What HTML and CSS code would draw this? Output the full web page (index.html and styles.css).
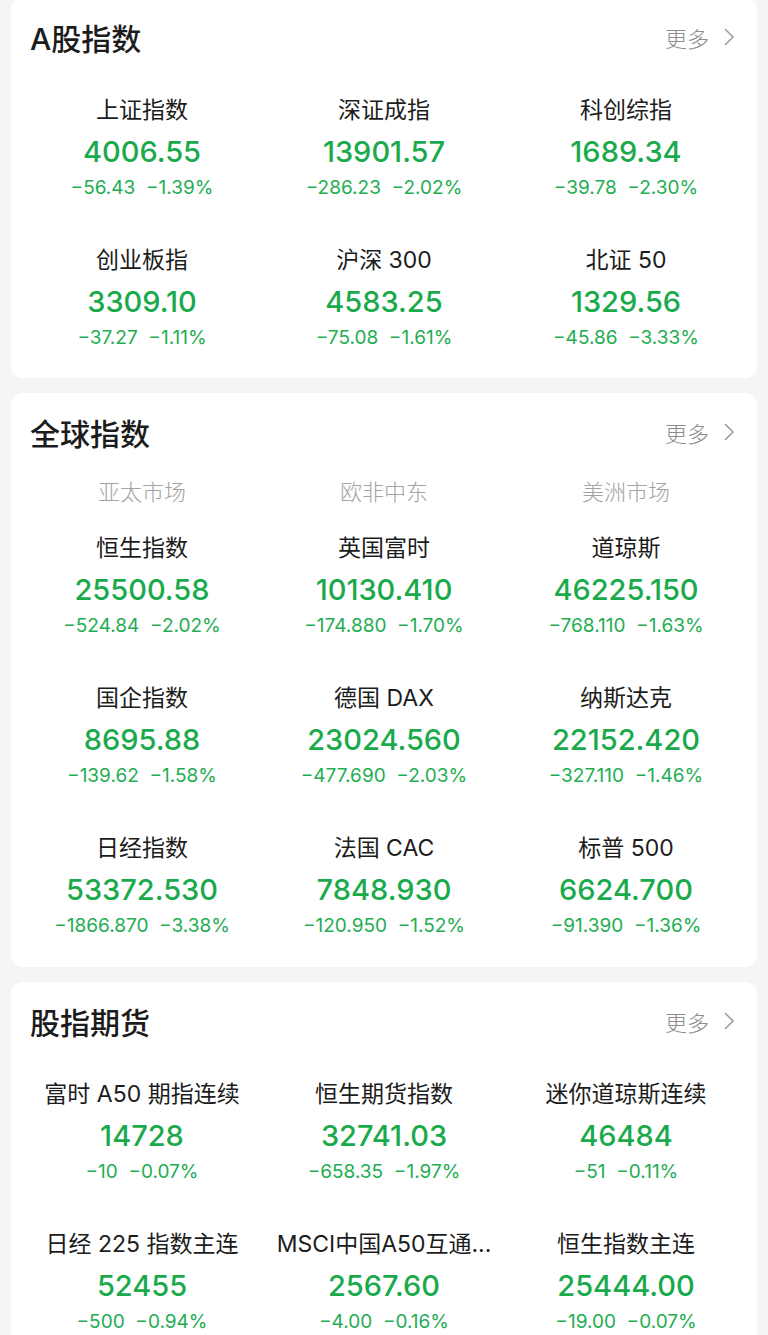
FILE: index.html
```html
<!DOCTYPE html>
<html lang="zh-CN">
<head>
  <meta charset="UTF-8">
  <meta name="viewport" content="width=device-width, initial-scale=1.0">
  <title>指数</title>
  <link rel="stylesheet" href="styles.css">
</head>
<body>

  <section class="card first">
    <div class="card-head">
      <h2>A股指数</h2>
      <a class="more" href="#">更多
        <svg width="12" height="20" viewBox="0 0 12 20"><polyline points="2,2 10,10 2,18" /></svg>
      </a>
    </div>
    <div class="grid">
      <div class="item"><div class="name">上证指数</div><div class="value">4006.55</div><div class="change">−56.43&nbsp;&nbsp;−1.39%</div></div>
      <div class="item"><div class="name">深证成指</div><div class="value">13901.57</div><div class="change">−286.23&nbsp;&nbsp;−2.02%</div></div>
      <div class="item"><div class="name">科创综指</div><div class="value">1689.34</div><div class="change">−39.78&nbsp;&nbsp;−2.30%</div></div>
      <div class="item"><div class="name">创业板指</div><div class="value">3309.10</div><div class="change">−37.27&nbsp;&nbsp;−1.11%</div></div>
      <div class="item"><div class="name">沪深 300</div><div class="value">4583.25</div><div class="change">−75.08&nbsp;&nbsp;−1.61%</div></div>
      <div class="item"><div class="name">北证 50</div><div class="value">1329.56</div><div class="change">−45.86&nbsp;&nbsp;−3.33%</div></div>
    </div>
  </section>

  <section class="card">
    <div class="card-head">
      <h2>全球指数</h2>
      <a class="more" href="#">更多
        <svg width="12" height="20" viewBox="0 0 12 20"><polyline points="2,2 10,10 2,18" /></svg>
      </a>
    </div>
    <div class="regions">
      <span>亚太市场</span>
      <span>欧非中东</span>
      <span>美洲市场</span>
    </div>
    <div class="grid after-regions">
      <div class="item"><div class="name">恒生指数</div><div class="value">25500.58</div><div class="change">−524.84&nbsp;&nbsp;−2.02%</div></div>
      <div class="item"><div class="name">英国富时</div><div class="value">10130.410</div><div class="change">−174.880&nbsp;&nbsp;−1.70%</div></div>
      <div class="item"><div class="name">道琼斯</div><div class="value">46225.150</div><div class="change">−768.110&nbsp;&nbsp;−1.63%</div></div>
      <div class="item"><div class="name">国企指数</div><div class="value">8695.88</div><div class="change">−139.62&nbsp;&nbsp;−1.58%</div></div>
      <div class="item"><div class="name">德国 DAX</div><div class="value">23024.560</div><div class="change">−477.690&nbsp;&nbsp;−2.03%</div></div>
      <div class="item"><div class="name">纳斯达克</div><div class="value">22152.420</div><div class="change">−327.110&nbsp;&nbsp;−1.46%</div></div>
      <div class="item"><div class="name">日经指数</div><div class="value">53372.530</div><div class="change">−1866.870&nbsp;&nbsp;−3.38%</div></div>
      <div class="item"><div class="name">法国 CAC</div><div class="value">7848.930</div><div class="change">−120.950&nbsp;&nbsp;−1.52%</div></div>
      <div class="item"><div class="name">标普 500</div><div class="value">6624.700</div><div class="change">−91.390&nbsp;&nbsp;−1.36%</div></div>
    </div>
  </section>

  <section class="card">
    <div class="card-head">
      <h2>股指期货</h2>
      <a class="more" href="#">更多
        <svg width="12" height="20" viewBox="0 0 12 20"><polyline points="2,2 10,10 2,18" /></svg>
      </a>
    </div>
    <div class="grid">
      <div class="item"><div class="name">富时 A50 期指连续</div><div class="value">14728</div><div class="change">−10&nbsp;&nbsp;−0.07%</div></div>
      <div class="item"><div class="name">恒生期货指数</div><div class="value">32741.03</div><div class="change">−658.35&nbsp;&nbsp;−1.97%</div></div>
      <div class="item"><div class="name">迷你道琼斯连续</div><div class="value">46484</div><div class="change">−51&nbsp;&nbsp;−0.11%</div></div>
      <div class="item"><div class="name">日经 225 指数主连</div><div class="value">52455</div><div class="change">−500&nbsp;&nbsp;−0.94%</div></div>
      <div class="item"><div class="name">MSCI中国A50互通...</div><div class="value">2567.60</div><div class="change">−4.00&nbsp;&nbsp;−0.16%</div></div>
      <div class="item"><div class="name">恒生指数主连</div><div class="value">25444.00</div><div class="change">−19.00&nbsp;&nbsp;−0.07%</div></div>
    </div>
  </section>

</body>
</html>
```

FILE: styles.css
```css
body { margin: 0; background: #f5f5f5; font-family: "Inter", "Noto Sans CJK SC", sans-serif; color: #1c1c1c; }
.card { background: #fff; margin: 0 11px 15px; border-radius: 12px; }
.card.first { margin-top: -2px; }
.card-head { height: 77px; padding: 0 22px 3px 19px; display: flex; align-items: center; justify-content: space-between; }
.card-head h2 { margin: 0; font-size: 30px; font-weight: 500; color: #1c1c1c; }
.more { display: flex; align-items: center; gap: 14px; font-size: 22px; font-weight: 300; color: #8c8c8c; text-decoration: none; }
.more svg { fill: none; stroke: #999; stroke-width: 1.5; }
.regions { display: grid; grid-template-columns: repeat(3, 1fr); padding: 0 10px; height: 34px; align-items: center; }
.regions span { text-align: center; font-size: 22px; font-weight: 300; color: #a3a3a3; }
.grid { display: grid; grid-template-columns: repeat(3, 1fr); row-gap: 43px; padding: 17px 10px 26px; }
.grid.after-regions { padding-top: 26px; padding-bottom: 27px; }
.item { display: flex; flex-direction: column; align-items: center; }
.name { font-size: 23px; line-height: 30px; white-space: nowrap; color: #1c1c1c; }
.value { font-size: 29px; line-height: 40px; margin-top: 7px; font-weight: 500; color: #1aaa4c; }
.change { font-size: 19px; line-height: 28px; margin-top: 2px; color: #23ad52; }
```
